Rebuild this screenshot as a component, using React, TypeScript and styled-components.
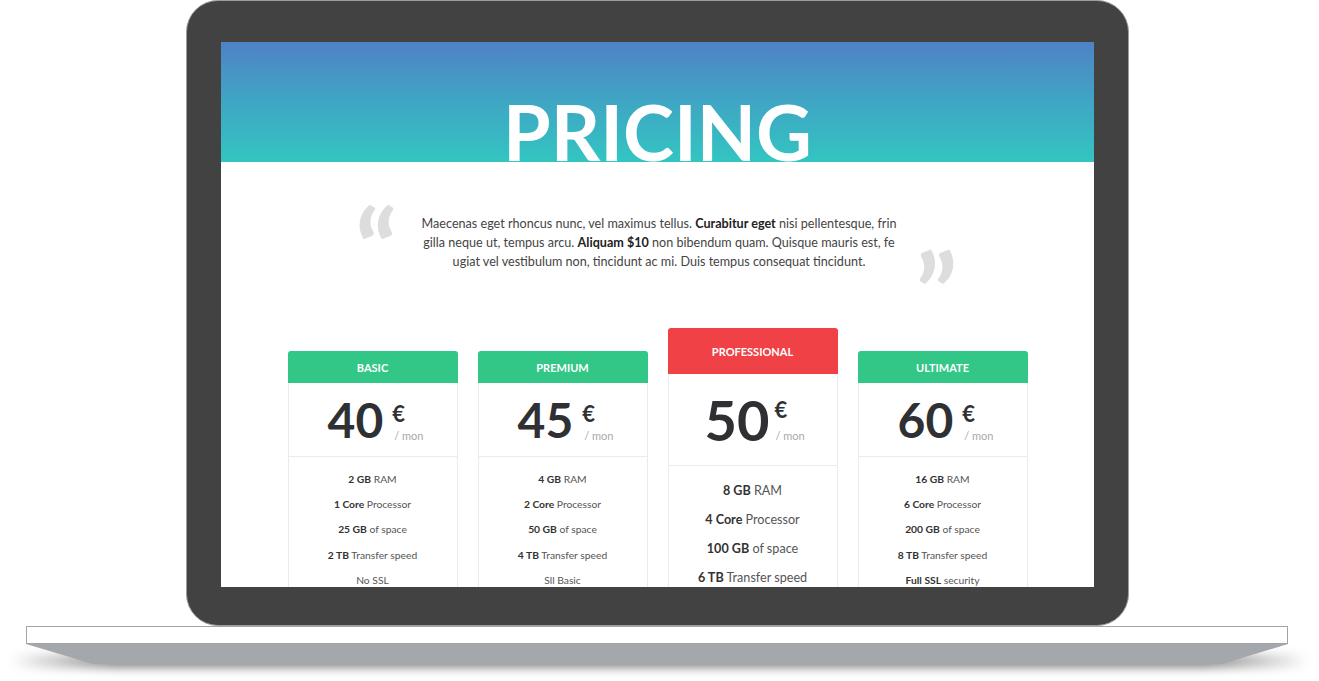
import React from "react";
import styled, { createGlobalStyle } from "styled-components";

const Global = createGlobalStyle`
  html, body { margin: 0; padding: 0; background: #ffffff; }
  body { font-family: Lato, "Open Sans", Arial, sans-serif; }
  * { box-sizing: border-box; }
`;

const Stage = styled.div`
  width: 1319px;
  height: 681px;
  overflow: hidden;
  background: #ffffff;
`;

const Lid = styled.div`
  margin-left: 186px;
  width: 943px;
  height: 626px;
  border-radius: 32px;
  background: #424242;
  border: 1px solid #9d9d9d;
  padding: 41px 34px 38px 34px;
`;

const Screen = styled.div`
  width: 100%;
  height: 100%;
  background: #ffffff;
  overflow: hidden;
  display: flex;
  flex-direction: column;
`;

const Hero = styled.header`
  height: 120px;
  flex: none;
  overflow: hidden;
  background: linear-gradient(180deg, #4f82c6 0%, #3fa6c4 50%, #33c5c1 100%);
  text-align: center;
`;

const Title = styled.h1`
  margin: 0;
  padding-top: 51px;
  font-family: Lato, sans-serif;
  font-weight: 700;
  font-size: 77px;
  line-height: 1;
  color: #ffffff;
  letter-spacing: 0;
`;

const QuoteRow = styled.section`
  display: flex;
  justify-content: center;
  align-items: flex-start;
  margin-top: 32px;
  padding-left: 11px;
`;

const Mark = styled.span<{ $end?: boolean }>`
  flex: none;
  width: ${(p) => (p.$end ? "52px" : "54px")};
  height: 60px;
  font-family: Lato, sans-serif;
  font-weight: 700;
  font-size: 110px;
  line-height: 1;
  color: #dddddd;
  margin-top: ${(p) => (p.$end ? "42px" : "-2px")};
  margin-left: ${(p) => (p.$end ? "16px" : "-4px")};
  margin-right: ${(p) => (p.$end ? "0" : "10px")};
`;

const QuoteText = styled.p`
  margin: 20px 0 0;
  width: 480px;
  flex: none;
  font-family: Lato, sans-serif;
  font-size: 12.6px;
  line-height: 19px;
  color: #444444;
  text-align: center;
  b { font-weight: 700; color: #222222; }
`;

const Line = styled.span`
  display: block;
  white-space: nowrap;
`;

const Cards = styled.section`
  display: flex;
  justify-content: center;
  align-items: flex-start;
  gap: 20px;
  margin-top: 32px;
`;

const Card = styled.article<{ $featured?: boolean }>`
  width: 170px;
  margin-top: ${(p) => (p.$featured ? "0" : "23px")};
  background: #ffffff;
  display: flex;
  flex-direction: column;
`;

const CardHead = styled.div<{ $featured?: boolean }>`
  height: ${(p) => (p.$featured ? "46px" : "32px")};
  border-radius: 3px 3px 0 0;
  background: ${(p) => (p.$featured ? "#ef4146" : "#32c687")};
  color: #ffffff;
  font-family: Lato, sans-serif;
  font-weight: 700;
  font-size: 11px;
  text-transform: uppercase;
  display: flex;
  align-items: center;
  justify-content: center;
`;

const CardBody = styled.div`
  border-left: 1px solid #ebebeb;
  border-right: 1px solid #ebebeb;
`;

const PriceBox = styled.div<{ $featured?: boolean }>`
  height: ${(p) => (p.$featured ? "92px" : "74px")};
  border-bottom: 1px solid #ebebeb;
  display: flex;
  align-items: center;
  justify-content: center;
  gap: ${(p) => (p.$featured ? "5px" : "9px")};
  padding-left: ${(p) => (p.$featured ? "4px" : "6px")};
`;

const Amount = styled.span<{ $featured?: boolean }>`
  font-family: Lato, sans-serif;
  font-weight: 700;
  font-size: ${(p) => (p.$featured ? "56px" : "48px")};
  line-height: 1;
  color: #2f3033;
`;

const Side = styled.span<{ $featured?: boolean }>`
  display: flex;
  flex-direction: column;
  align-self: stretch;
  justify-content: center;
  padding-top: ${(p) => (p.$featured ? "2px" : "6px")};
`;

const Euro = styled.span`
  font-family: Lato, sans-serif;
  font-weight: 700;
  font-size: 22px;
  line-height: 20px;
  color: #2f3033;
`;

const Per = styled.span<{ $featured?: boolean }>`
  margin-top: ${(p) => (p.$featured ? "10px" : "6px")};
  margin-left: ${(p) => (p.$featured ? "1px" : "2px")};
  font-family: Lato, sans-serif;
  font-size: 11px;
  line-height: 12px;
  color: #a9a9a9;
  white-space: nowrap;
`;

const Features = styled.ul`
  list-style: none;
  margin: 0;
  padding: 10px 0 0;
  height: 200px;
`;

const Feature = styled.li<{ $featured?: boolean }>`
  font-family: Lato, sans-serif;
  font-size: ${(p) => (p.$featured ? "12.6px" : "10.3px")};
  line-height: ${(p) => (p.$featured ? "29px" : "25.2px")};
  color: #555555;
  text-align: center;
  b { font-weight: 700; color: #333333; }
`;

const Slab = styled.div`
  margin-left: 26px;
  width: 1262px;
  height: 18px;
  background: #ffffff;
  border: 1px solid #a3a3a3;
`;

const Foot = styled.svg`
  display: block;
`;

type Plan = {
  name: string;
  price: string;
  featured?: boolean;
  features: [string, string][];
};

const plans: Plan[] = [
  {
    name: "Basic",
    price: "40",
    features: [
      ["2 GB", " RAM"],
      ["1 Core", " Processor"],
      ["25 GB", " of space"],
      ["2 TB", " Transfer speed"],
      ["", "No SSL"],
    ],
  },
  {
    name: "Premium",
    price: "45",
    features: [
      ["4 GB", " RAM"],
      ["2 Core", " Processor"],
      ["50 GB", " of space"],
      ["4 TB", " Transfer speed"],
      ["", "Sll Basic"],
    ],
  },
  {
    name: "Professional",
    price: "50",
    featured: true,
    features: [
      ["8 GB", " RAM"],
      ["4 Core", " Processor"],
      ["100 GB", " of space"],
      ["6 TB", " Transfer speed"],
      ["Full SSL", " security"],
    ],
  },
  {
    name: "Ultimate",
    price: "60",
    features: [
      ["16 GB", " RAM"],
      ["6 Core", " Processor"],
      ["200 GB", " of space"],
      ["8 TB", " Transfer speed"],
      ["Full SSL", " security"],
    ],
  },
];

export default function App() {
  return (
    <Stage>
      <Global />
      <Lid>
        <Screen>
          <Hero>
            <Title>PRICING</Title>
          </Hero>
          <QuoteRow>
            <Mark>“</Mark>
            <QuoteText>
              <Line>
                Maecenas eget rhoncus nunc, vel maximus tellus. <b>Curabitur eget</b> nisi pellentesque, frin
              </Line>
              <Line>
                gilla neque ut, tempus arcu. <b>Aliquam $10</b> non bibendum quam. Quisque mauris est, fe
              </Line>
              <Line>ugiat vel vestibulum non, tincidunt ac mi. Duis tempus consequat tincidunt.</Line>
            </QuoteText>
            <Mark $end>”</Mark>
          </QuoteRow>
          <Cards>
            {plans.map((p) => (
              <Card key={p.name} $featured={p.featured}>
                <CardHead $featured={p.featured}>{p.name}</CardHead>
                <CardBody>
                  <PriceBox $featured={p.featured}>
                    <Amount $featured={p.featured}>{p.price}</Amount>
                    <Side $featured={p.featured}>
                      <Euro>€</Euro>
                      <Per $featured={p.featured}>/ mon</Per>
                    </Side>
                  </PriceBox>
                  <Features>
                    {p.features.map(([strong, rest], i) => (
                      <Feature key={i} $featured={p.featured}>
                        {strong && <b>{strong}</b>}
                        {rest}
                      </Feature>
                    ))}
                  </Features>
                </CardBody>
              </Card>
            ))}
          </Cards>
        </Screen>
      </Lid>
      <Slab />
      <Foot width="1319" height="37" viewBox="0 0 1319 37">
        <defs>
          <filter id="blur" x="-10%" y="-200%" width="120%" height="500%">
            <feGaussianBlur stdDeviation="5" />
          </filter>
          <linearGradient id="fade" x1="0" x2="1" y1="0" y2="0">
            <stop offset="0" stopColor="#000" stopOpacity="0" />
            <stop offset="0.08" stopColor="#000" stopOpacity="0.45" />
            <stop offset="0.92" stopColor="#000" stopOpacity="0.45" />
            <stop offset="1" stopColor="#000" stopOpacity="0" />
          </linearGradient>
        </defs>
        <rect x="10" y="10" width="1299" height="14" fill="url(#fade)" filter="url(#blur)" />
        <polygon points="26,0 1288,0 1222,20 93,20" fill="#a4a7ab" />
      </Foot>
    </Stage>
  );
}
